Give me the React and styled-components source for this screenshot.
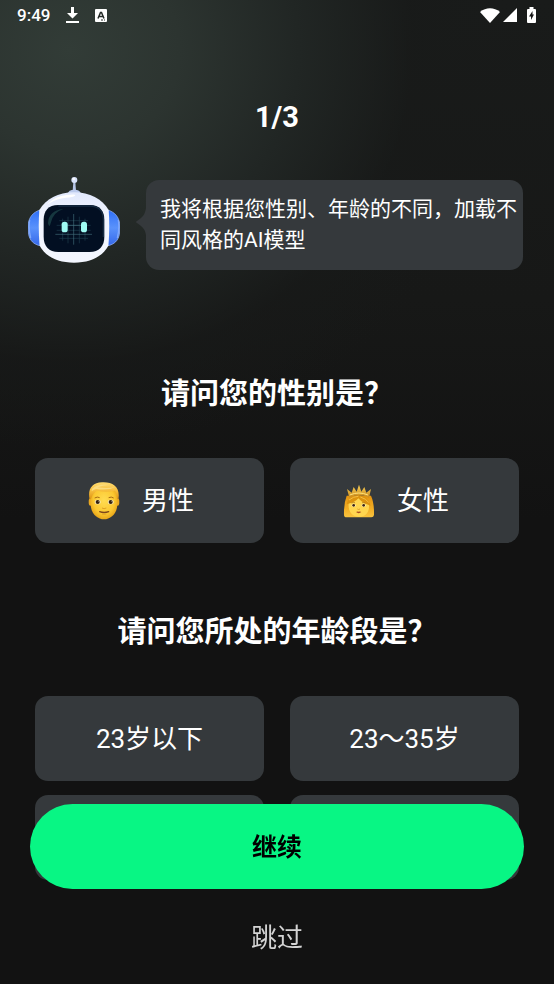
import React from "react";
import styled, { createGlobalStyle } from "styled-components";

const GlobalStyle = createGlobalStyle`
  * { box-sizing: border-box; }
  body {
    margin: 0;
    background: #121212;
    color: #fff;
    font-family: Roboto, "Noto Sans CJK SC", sans-serif;
  }
  button { font-family: inherit; border: 0; cursor: pointer; }
`;

const Screen = styled.div`
  min-height: 100vh;
  overflow: hidden;
  background:
    radial-gradient(ellipse 440px 400px at 70px 50px, #323c37 0%, #2c3430 25%, #212624 52%, rgba(24, 26, 25, 0.6) 78%, rgba(18, 18, 18, 0) 100%),
    linear-gradient(180deg, #191b1a 0, #171817 300px, #121212 520px);
`;

const StatusBar = styled.header`
  display: flex;
  align-items: center;
  justify-content: space-between;
  height: 30px;
  padding: 0 18px 0 17px;
`;

const StatusGroup = styled.div`
  display: flex;
  align-items: center;
  gap: ${(p) => p.$gap}px;
`;

const Clock = styled.time`
  font-size: 17px;
  line-height: 30px;
  font-weight: 500;
`;

const Content = styled.main`
  display: flex;
  flex-direction: column;
`;

const Progress = styled.p`
  margin: 67px 0 0;
  text-align: center;
  font-size: 29px;
  line-height: 40px;
  font-weight: 700;
`;

const Intro = styled.section`
  display: flex;
  align-items: flex-end;
  margin: 40px 31px 0 28px;
`;

const RobotSlot = styled.div`
  display: flex;
  padding-bottom: 7px;
`;

const BubbleRow = styled.div`
  display: flex;
  flex: 1;
  align-items: flex-start;
  margin-left: 16px;
`;

const Bubble = styled.p`
  flex: 1;
  margin: 0;
  padding: 14px 6px 14px 14px;
  border-radius: 13px;
  background: #35393c;
  font-size: 21px;
  line-height: 31px;
`;

const Question = styled.h2`
  margin: ${(p) => p.$top}px 0 0;
  text-align: center;
  font-size: 29px;
  line-height: 44px;
  font-weight: 700;
`;

const Options = styled.div`
  display: grid;
  grid-template-columns: 1fr 1fr;
  gap: 14px 26px;
  margin: 42px 35px 0;
`;

const Option = styled.button`
  display: flex;
  align-items: center;
  justify-content: center;
  gap: 22px;
  height: 85px;
  padding: 0 ${(p) => (p.$withFace ? 17 : 0)}px 0 0;
  border-radius: 13px;
  background: #35393c;
  color: #fff;
  font-size: 26px;
  line-height: 40px;
`;

const Footer = styled.footer`
  position: fixed;
  inset: auto 0 0 0;
  display: flex;
  flex-direction: column;
  align-items: center;
  padding: 0 30px 26px;
`;

const Continue = styled.button`
  width: 100%;
  height: 85px;
  padding: 0 0 4px;
  border-radius: 43px;
  background: #08f684;
  color: #000;
  font-size: 25px;
  font-weight: 700;
`;

const Skip = styled.button`
  margin-top: 29px;
  padding: 0 16px;
  background: none;
  color: #d4d4d4;
  font-size: 26px;
  line-height: 40px;
`;

const DownloadIcon = () => (
  <svg width="13" height="16" viewBox="0 0 13 16" fill="#fff" aria-hidden="true">
    <path d="M5 0h3v6h4L6.500 11.500 1 6h4zM0 14h13v2H0z" />
  </svg>
);

const LetterIcon = () => (
  <svg width="12" height="13" viewBox="0 0 12 13" aria-hidden="true">
    <rect width="12" height="13" rx="1" fill="#fff" />
    <path d="M3 9.500 5.500 3.500h1L9 9.500M4 7.500h4" fill="none" stroke="#252b28" strokeWidth="1.500" />
    <path d="M6 11h4" stroke="#252b28" strokeDasharray="2 1" />
  </svg>
);

const WifiIcon = () => (
  <svg width="20" height="15" viewBox="0 0 20 15" fill="#fff" aria-hidden="true">
    <path d="M0 4C6-1 14-1 20 4L10 15z" />
  </svg>
);

const SignalIcon = () => (
  <svg width="14" height="14" viewBox="0 0 14 14" fill="#fff" aria-hidden="true">
    <path d="M14 0v14H0z" />
  </svg>
);

const BatteryIcon = () => (
  <svg width="9" height="16" viewBox="0 0 9 16" aria-hidden="true">
    <path d="M2.500 0h4v2H8q1 0 1 1v12q0 1-1 1H1q-1 0-1-1V3q0-1 1-1h1.500z" fill="#fff" />
    <path d="M5.500 4 2 9.500h2V13l3-5.500H5.500z" fill="#171717" />
  </svg>
);

const Robot = () => (
  <svg width="92" height="86" viewBox="42 21 276 258" role="img" aria-label="AI">
    <defs>
      <linearGradient id="ear" x1="0" y1="0" x2="0" y2="1">
        <stop offset="0" stopColor="#2f6ff6" />
        <stop offset="0.500" stopColor="#5a92fb" />
        <stop offset="1" stopColor="#3568ea" />
      </linearGradient>
      <linearGradient id="shell" x1="0" y1="0" x2="0" y2="1">
        <stop offset="0" stopColor="#e1e8fc" />
        <stop offset="0.300" stopColor="#f0f4ff" />
        <stop offset="1" stopColor="#f3f6ff" />
      </linearGradient>
    </defs>
    <path d="M178 36h6l2 26h-10z" fill="#b4c4e6" />
    <circle cx="181" cy="30" r="9" fill="#d8e2fa" />
    <circle cx="179" cy="27" r="4" fill="#f8faff" />
    <path d="M161 72q2-13 20-13t20 13z" fill="#bccbed" />
    <path d="M78 120C57 127 46 141 43 160q-2 17 1 34c4 18 15 29 34 33z" fill="url(#ear)" stroke="#9bbafb" strokeWidth="2" />
    <path d="M282 120c21 7 32 21 35 40q2 17-1 34c-4 18-15 29-34 33z" fill="url(#ear)" stroke="#9bbafb" strokeWidth="2" />
    <path d="M47 150q-4 26 3 54" fill="none" stroke="#7fa8fc" strokeWidth="4" />
    <path d="M313 150q4 26-3 54" fill="none" stroke="#7fa8fc" strokeWidth="4" />
    <path d="M180 67c48 0 84 20 104 53q4 54-1 107c-18 33-54 51-103 51s-85-18-103-51q-5-53-1-107c20-33 56-53 104-53z" fill="url(#shell)" />
    <path d="M103 100q20-21 55-25 30-4 25 2-5 4-27 6-28 3-47 15-10 7-6 2z" fill="#fff" />
    <path d="M133 105h94c30 0 44 18 44 44v52c0 28-16 45-44 45h-94c-28 0-44-17-44-45v-52c0-26 14-44 44-44z" fill="#020f22" />
    <path d="M133 108h94c28 0 41 17 41 41v52" fill="none" stroke="#162b42" strokeWidth="4" />
    <path d="M102 160q1-38 46-43-32 10-38 43-4 17-8 0z" fill="#16373f" />
    <g stroke="#315e6b" strokeWidth="2" opacity="0.600">
      <path d="M146 146v66M162 140v80M196 140v80M213 146v66M136 152h86M128 166h102M128 181h102M136 205h86" />
    </g>
    <path d="M179 132v92M124 193h110M152 166h56" stroke="#5b919b" strokeWidth="2" opacity="0.700" />
    <rect x="143" y="155" width="18" height="32" rx="8" fill="#9efcf4" />
    <rect x="201" y="155" width="18" height="32" rx="8" fill="#9efcf4" />
  </svg>
);

const BubbleTail = () => (
  <svg width="10" height="57" viewBox="0 0 10 57" fill="#35393c" aria-hidden="true">
    <path d="M10 28Q9 35 5 38L1 41q-2 1 0 2l4 3q4 3 5 9z" />
  </svg>
);

const ManFace = () => (
  <svg width="32" height="38" viewBox="36 35 96 114" aria-hidden="true">
    <defs>
      <radialGradient id="manSkin" cx="0.500" cy="0.450" r="0.600">
        <stop offset="0" stopColor="#ffdc52" />
        <stop offset="0.650" stopColor="#fbc831" />
        <stop offset="1" stopColor="#e39c12" />
      </radialGradient>
      <linearGradient id="manHair" x1="0" y1="0" x2="0" y2="1">
        <stop offset="0" stopColor="#ffdb70" />
        <stop offset="0.500" stopColor="#f6bd3c" />
        <stop offset="1" stopColor="#dd9212" />
      </linearGradient>
    </defs>
    <ellipse cx="43" cy="95" rx="5" ry="11" fill="#eaa820" />
    <ellipse cx="125" cy="95" rx="5" ry="11" fill="#eaa820" />
    <path d="M44 72q0-28 40-28t40 28v30c0 27-20 45-40 45s-40-18-40-45z" fill="url(#manSkin)" />
    <path d="M41 87C34 58 48 36 78 36c33-2 56 15 49 51l-4-2q0-15-6-24-26 6-54 0-12 5-18 25z" fill="url(#manHair)" />
    <path d="M48 55q21-17 56-11-26 1-39 7 31 5 53-1-20 11-58 6-8 2-13 7z" fill="#fce08a" opacity="0.800" />
    <path d="M56 83q8-5 15-1M98 82q8-4 15 1" fill="none" stroke="#a76a13" strokeWidth="3" />
    <ellipse cx="65" cy="95" rx="9" ry="7" fill="#f8e9b7" />
    <ellipse cx="104" cy="95" rx="9" ry="7" fill="#f8e9b7" />
    <circle cx="65" cy="95" r="6" fill="#342111" />
    <circle cx="104" cy="95" r="6" fill="#342111" />
    <circle cx="67" cy="93" r="1" fill="#fff" />
    <circle cx="106" cy="93" r="1" fill="#fff" />
    <path d="M78 113q6 4 13 0" fill="none" stroke="#d28c18" strokeWidth="2" />
    <path d="M71 124q13 5 27 0" fill="none" stroke="#7d461b" strokeWidth="4" strokeLinecap="round" />
    <path d="M78 131q7 2 13 0" fill="none" stroke="#d9941e" strokeWidth="2" />
  </svg>
);

const PrincessFace = () => (
  <svg width="32" height="34" viewBox="39 45 96 102" aria-hidden="true">
    <defs>
      <linearGradient id="womanHair" x1="0" y1="0" x2="0" y2="1">
        <stop offset="0" stopColor="#e3930f" />
        <stop offset="0.600" stopColor="#f2ae25" />
        <stop offset="1" stopColor="#f9c43f" />
      </linearGradient>
      <linearGradient id="crown" x1="0" y1="0" x2="0" y2="1">
        <stop offset="0" stopColor="#fbd257" />
        <stop offset="1" stopColor="#c98a1c" />
      </linearGradient>
    </defs>
    <path d="M50 80h73q10 22 9 58-1 7-8 7H50q-8 0-8-8-1-34 8-57z" fill="url(#womanHair)" />
    <path d="M56 102q8-17 32-19 23 4 29 24c2 22-10 37-30 37s-34-17-31-42z" fill="#ffd64f" />
    <path d="M50 106q4-24 35-28 30 3 37 32-24-7-37-22-9 12-30 16z" fill="#dc930f" />
    <path d="M57 93q14-11 28-11M91 84q17 5 25 16" fill="none" stroke="#f6bd40" strokeWidth="3" />
    <path d="m51 60 14 11 6-17 9 14 7-21 7 21 9-14 6 17 14-11-6 26q-28-14-59 0z" fill="url(#crown)" />
    <path d="M59 78q28-12 55 0" fill="none" stroke="#ffe27b" strokeWidth="3" />
    <path d="M64 102q6-3 11-1M96 101q6-2 11 2" fill="none" stroke="#ad7416" strokeWidth="2" />
    <ellipse cx="71" cy="109" rx="6" ry="5" fill="#fbedc0" />
    <ellipse cx="101" cy="109" rx="6" ry="5" fill="#fbedc0" />
    <circle cx="71" cy="109" r="4" fill="#3f2611" />
    <circle cx="101" cy="109" r="4" fill="#3f2611" />
    <path d="M82 120q4 3 8 0" fill="none" stroke="#cd8c1b" strokeWidth="2" />
    <path d="M78 129q4-3 8-1 5-2 8 1-8 7-16 0z" fill="#a8491f" />
  </svg>
);

export default function App() {
  return (
    <Screen>
      <GlobalStyle />
      <StatusBar>
        <StatusGroup $gap={16}>
          <Clock>9:49</Clock>
          <DownloadIcon />
          <LetterIcon />
        </StatusGroup>
        <StatusGroup $gap={3}>
          <WifiIcon />
          <StatusGroup $gap={10}>
            <SignalIcon />
            <BatteryIcon />
          </StatusGroup>
        </StatusGroup>
      </StatusBar>
      <Content>
        <Progress>1/3</Progress>
        <Intro>
          <RobotSlot>
            <Robot />
          </RobotSlot>
          <BubbleRow>
            <BubbleTail />
            <Bubble>我将根据您性别、年龄的不同，加载不同风格的AI模型</Bubble>
          </BubbleRow>
        </Intro>
        <Question $top={102}>请问您的性别是？</Question>
        <Options>
          <Option type="button" $withFace>
            <ManFace />
            男性
          </Option>
          <Option type="button" $withFace>
            <PrincessFace />
            女性
          </Option>
        </Options>
        <Question $top={67}>请问您所处的年龄段是？</Question>
        <Options>
          <Option type="button">23岁以下</Option>
          <Option type="button">23～35岁</Option>
          <Option as="div" aria-hidden="true" />
          <Option as="div" aria-hidden="true" />
        </Options>
      </Content>
      <Footer>
        <Continue type="button">继续</Continue>
        <Skip type="button">跳过</Skip>
      </Footer>
    </Screen>
  );
}
